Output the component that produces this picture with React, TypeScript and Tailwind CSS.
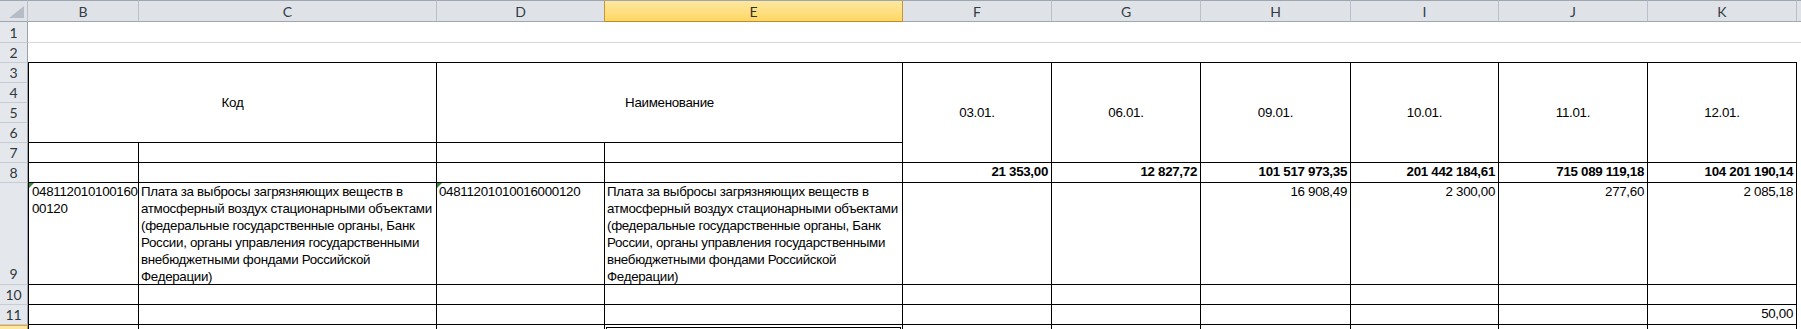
import React from 'react';

const cols = ['B', 'C', 'D', 'E', 'F', 'G', 'H', 'I', 'J', 'K'];
const dates = ['03.01.', '06.01.', '09.01.', '10.01.', '11.01.', '12.01.'];
const totals = ['21 353,00', '12 827,72', '101 517 973,35', '201 442 184,61', '715 089 119,18', '104 201 190,14'];
const row9 = ['', '', '16 908,49', '2 300,00', '277,60', '2 085,18'];
const row11 = ['', '', '', '', '', '50,00'];

const nameLines = [
    'Плата за выбросы загрязняющих веществ в',
    'атмосферный воздух стационарными объектами',
    '(федеральные государственные органы, Банк',
    'России, органы управления государственными',
    'внебюджетными фондами Российской',
    'Федерации)',
];

const headFont = { fontFamily: 'Lato, "Open Sans", sans-serif' };

function RowHead({ n, selected }: { n?: number; selected?: boolean }) {
    return (
        <div
            className={
                selected
                    ? 'flex items-start justify-center border-r border-t border-r-[#c9963a] border-t-[#e2a43c] bg-gradient-to-b from-[#fde9a4] to-[#ffd867]'
                    : 'flex items-center justify-center border-r border-b border-r-[#9aa3ad] border-b-[#c7ccd3] bg-[#e4e7eb] text-[14px] tracking-normal text-[#2f3740]'
            }
            style={headFont}
        >
            {n}
        </div>
    );
}

function ColHead({ label }: { label: string }) {
    if (label === 'E') {
        return (
            <div
                className="flex items-center justify-center border-t border-b border-r border-t-[#9ea6b0] border-b-[#c28a2e] border-r-[#c8963a] bg-gradient-to-b from-[#fde8a0] to-[#ffd761] text-[14px] tracking-normal text-[#333]"
                style={headFont}
            >
                {label}
            </div>
        );
    }
    return (
        <div
            className={
                label === 'D'
                    ? 'flex items-center justify-center border-t border-b border-r border-t-[#9ea6b0] border-b-[#9ea6b0] border-r-[#c8963a] bg-[#dfe3e8] text-[14px] tracking-normal text-[#333c46]'
                    : 'flex items-center justify-center border-t border-b border-r border-t-[#9ea6b0] border-b-[#9ea6b0] border-r-[#b9c0c9] bg-[#dfe3e8] text-[14px] tracking-normal text-[#333c46]'
            }
            style={headFont}
        >
            {label}
        </div>
    );
}

function Marker() {
    return <div className="absolute left-0 top-0 h-0 w-0 border-t-[5px] border-r-[5px] border-t-[#2e8b3c] border-r-transparent" />;
}

export default function App() {
    return (
        <div
            className="h-[329px] w-[1801px] overflow-hidden bg-white text-[13.33px] leading-[17px] tracking-[-0.3px] text-black"
            style={{ fontFamily: '"Liberation Sans", Arial, sans-serif' }}
        >
            <div className="grid grid-cols-[28px_111px_298px_168px_298px_149px_149px_150px_148px_149px_149px_1fr] grid-rows-[22px_21px_20px_20px_20px_20px_20px_20px_20px_102px_20px_20px_20px]">
                {/* column header row */}
                <div className="relative border-t border-b border-r border-t-[#9ea6b0] border-b-[#9ea6b0] border-r-[#b9c0c9] bg-[#dfe3e8]">
                    <svg className="absolute right-[3px] bottom-[3px]" width="15" height="12" viewBox="0 0 15 12">
                        <polygon points="15,0 15,12 0,12" fill="#b6bdc6" />
                    </svg>
                </div>
                {cols.map((c) => (
                    <ColHead key={c} label={c} />
                ))}
                <div className="border-t border-b border-t-[#9ea6b0] border-b-[#9ea6b0] bg-[#dfe3e8]" />

                {/* row 1 */}
                <RowHead n={1} />
                <div className="col-span-11 border-b border-b-[#d8d8d8]" />

                {/* row 2 */}
                <RowHead n={2} />
                <div className="col-span-10 border-b border-black" />
                <div />

                {/* row 3 — merged headers */}
                <RowHead n={3} />
                <div className="col-span-2 row-span-4 flex items-center justify-center border-l border-r border-b border-black">
                    Код
                </div>
                <div className="col-span-2 row-span-4 flex items-center justify-center border-r border-b border-black">
                    Наименование
                </div>
                {dates.map((d) => (
                    <div key={d} className="row-span-5 flex items-center justify-center border-r border-b border-black">
                        {d}
                    </div>
                ))}
                <div />

                <RowHead n={4} />
                <div />
                <RowHead n={5} />
                <div />
                <RowHead n={6} />
                <div />

                {/* row 7 */}
                <RowHead n={7} />
                <div className="border-l border-r border-b border-black" />
                <div className="border-r border-b border-black" />
                <div className="border-r border-b border-black" />
                <div className="border-r border-b border-black" />
                <div />

                {/* row 8 — totals */}
                <RowHead n={8} />
                <div className="border-l border-r border-b border-black" />
                <div className="border-r border-b border-black" />
                <div className="border-r border-b border-black" />
                <div className="border-r border-b border-black" />
                {totals.map((t) => (
                    <div key={t} className="flex items-end justify-end whitespace-nowrap border-r border-b border-black pr-[3px] pb-[2px] font-bold">
                        {t}
                    </div>
                ))}
                <div />

                {/* row 9 — data */}
                <div className="flex items-end justify-center border-r border-b border-r-[#9aa3ad] border-b-[#c7ccd3] bg-[#e4e7eb] pb-[2px] text-[14px] tracking-normal text-[#2f3740]" style={headFont}>
                    9
                </div>
                <div className="relative whitespace-nowrap border-l border-r border-b border-black pl-[3px]">
                    <Marker />
                    048112010100160
                    <br />
                    00120
                </div>
                <div className="whitespace-nowrap border-r border-b border-black pl-[2px]">
                    {nameLines.map((l, i) => (
                        <div key={i}>{l}</div>
                    ))}
                </div>
                <div className="relative whitespace-nowrap border-r border-b border-black pl-[2px]">
                    <Marker />
                    04811201010016000120
                </div>
                <div className="whitespace-nowrap border-r border-b border-black pl-[2px]">
                    {nameLines.map((l, i) => (
                        <div key={i}>{l}</div>
                    ))}
                </div>
                {row9.map((v, i) => (
                    <div key={i} className="whitespace-nowrap border-r border-b border-black pr-[3px] text-right">
                        {v}
                    </div>
                ))}
                <div />

                {/* row 10 */}
                <RowHead n={10} />
                <div className="border-l border-r border-b border-black" />
                {Array.from({ length: 9 }).map((_, i) => (
                    <div key={i} className="border-r border-b border-black" />
                ))}
                <div />

                {/* row 11 */}
                <RowHead n={11} />
                <div className="border-l border-r border-b border-black" />
                <div className="border-r border-b border-black" />
                <div className="border-r border-b border-black" />
                <div className="border-r border-b border-black" />
                {row11.map((v, i) => (
                    <div key={i} className="flex items-end justify-end whitespace-nowrap border-r border-b border-black pr-[3px] pb-[2px]">
                        {v}
                    </div>
                ))}
                <div />

                {/* row 12 — only its top edge is in view, E12 selected */}
                <RowHead selected />
                <div className="border-l border-r border-black" />
                <div className="border-r border-black" />
                <div className="border-r border-black" />
                <div className="relative border-r border-black">
                    <div className="absolute left-px right-px top-[2px] bottom-0 border-l border-r border-t border-black" />
                </div>
                {Array.from({ length: 6 }).map((_, i) => (
                    <div key={i} className="border-r border-black" />
                ))}
                <div />
            </div>
        </div>
    );
}
